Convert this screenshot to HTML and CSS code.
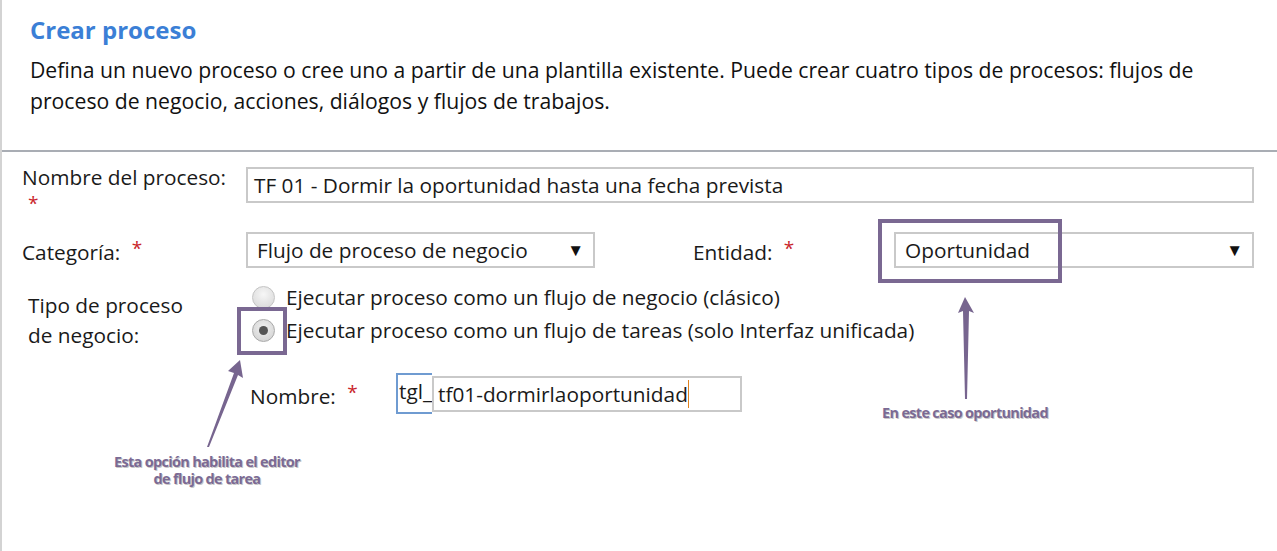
FILE: index.html
```html
<!DOCTYPE html>
<html>
  <head>
    <title>Crear proceso</title>
    <link rel="stylesheet" href="styles.css">
  </head>
  <body>
    <div class="page">
      <div class="intro">
        <h1>Crear proceso</h1>
        <p>Defina un nuevo proceso o cree uno a partir de una plantilla existente. Puede crear cuatro tipos de procesos: flujos de proceso de negocio, acciones, diálogos y flujos de trabajos.</p>
      </div>

      <div class="form">
        <div class="row row-name">
          <div class="lbl">Nombre del proceso:<span class="req">*</span></div>
          <div class="field wide">TF 01 - Dormir la oportunidad hasta una fecha prevista</div>
        </div>

        <div class="row row-cat">
          <div class="lbl">Categoría: <span class="req">*</span></div>
          <div class="field select cat">Flujo de proceso de negocio <span class="caret">&#9660;</span></div>
          <div class="lbl-ent">Entidad: <span class="req">*</span></div>
          <div class="field select ent">Oportunidad <span class="caret">&#9660;</span></div>
        </div>

        <div class="row row-type">
          <div class="lbl lbl-type">Tipo de proceso<br>de negocio:</div>
          <div class="options">
            <div class="opt"><span class="radio"></span>Ejecutar proceso como un flujo de negocio (clásico)</div>
            <div class="opt"><span class="radio on"></span>Ejecutar proceso como un flujo de tareas (solo Interfaz unificada)</div>
          </div>
        </div>

        <div class="row row-short">
          <div class="lbl-short">Nombre: <span class="req">*</span></div>
          <div class="prefix">tgl_</div>
          <div class="field short">tf01-dormirlaoportunida<span class="cursor">d</span></div>
        </div>
      </div>

      <!-- annotations -->
      <div class="mark mark-ent"></div>
      <div class="mark mark-radio"></div>
      <svg class="arrows" width="1277" height="551">
        <polygon points="965,297 958,313 963,311 965,399 967,399 969,311 974,313" />
        <polygon points="240,360 228,371 234,373 207,447 209,447 238,375 243,378" />
      </svg>
      <div class="note note-ent">En este caso oportunidad</div>
      <div class="note note-radio">Esta opción habilita el editor<br>de flujo de tarea</div>
    </div>
  </body>
</html>
```

FILE: styles.css
```css
body {
  margin: 0;
  padding: 0;
  background-color: #fff;
  font-family: "Open Sans", "Noto Sans", sans-serif;
  color: #1a1a1a;
}

.page {
  position: relative;
  width: 1277px;
  height: 551px;
  box-sizing: border-box;
  border-left: 2px solid #d3d3d3;
  overflow: hidden;
}

.intro {
  padding: 14px 67px 0 28px;
  height: 136px;
  border-bottom: 2px solid #a9adb4;
}

.intro h1 {
  margin: 0;
  font-size: 24px;
  font-weight: bold;
  color: #3b7fd6;
  line-height: 32px;
}

.intro p {
  margin: 8px 0 0 0;
  font-size: 21.2px;
  line-height: 31px;
  color: #111;
}

.form {
  padding: 14px 23px 0 20px;
  font-size: 20.8px;
}

.row {
  display: flex;
  align-items: flex-start;
}

.lbl {
  width: 224px;
  flex-shrink: 0;
  line-height: 22px;
}

.req {
  color: #c9252b;
  font-size: 19px;
  position: relative;
  top: -5px;
  margin-left: 6px;
}

.row-name .req {
  display: block;
  top: 0;
  margin: 6px 0 0 6px;
  line-height: 18px;
}

.field {
  box-sizing: border-box;
  border: 2px solid #c9c9c9;
  height: 36px;
  line-height: 32px;
  padding: 0 6px;
  white-space: nowrap;
}

.wide {
  flex: 1;
  margin-top: 1px;
}

.row-cat {
  margin-top: 20px;
  align-items: center;
}

.row-cat .lbl {
  padding-top: 4px;
}

.select {
  display: flex;
  justify-content: space-between;
  padding: 0 9px 0 9px;
}

.caret {
  font-size: 17px;
  color: #111;
}

.cat {
  width: 349px;
}

.lbl-ent {
  width: 201px;
  margin-left: 98px;
  padding-top: 4px;
}

.ent {
  flex: 1;
}

.row-type {
  margin-top: 17px;
}

.lbl-type {
  padding-left: 6px;
  width: 218px;
  line-height: 30px;
  padding-top: 5px;
}

.options {
  display: flex;
  flex-direction: column;
  gap: 9px;
}

.opt {
  display: flex;
  align-items: center;
  line-height: 24px;
}

.radio {
  width: 23px;
  height: 23px;
  margin: 0 11px 0 6px;
  border-radius: 50%;
  border: 1px solid #c4c4c4;
  background: radial-gradient(circle at 50% 35%, #f6f6f6, #d5d5d5);
  box-sizing: border-box;
  position: relative;
}

.radio.on {
  border-color: #a9a9a9;
  background: radial-gradient(circle at 50% 40%, #f2f2f2, #cdcdcd);
}

.radio.on::after {
  content: "";
  position: absolute;
  left: 6px;
  top: 6px;
  width: 9px;
  height: 9px;
  border-radius: 50%;
  background: #555;
}

.row-short {
  margin-top: 23px;
  align-items: center;
}

.lbl-short {
  width: 146px;
  padding-left: 228px;
  padding-top: 4px;
}

.prefix {
  box-sizing: border-box;
  height: 41px;
  width: 36px;
  border: 2px solid #6f9bd1;
  border-right: none;
  line-height: 32px;
  padding-left: 1px;
  overflow: hidden;
  white-space: nowrap;
}

.short {
  width: 310px;
  padding: 0 0 0 4px;
}

.cursor {
  border-right: 1px solid #e0821e;
}

/* annotation overlays */
.mark {
  position: absolute;
  border: 4px solid #7a6892;
  box-sizing: border-box;
}

.mark-ent {
  left: 876px;
  top: 219px;
  width: 184px;
  height: 64px;
}

.mark-radio {
  left: 235px;
  top: 307px;
  width: 50px;
  height: 48px;
}

.arrows {
  position: absolute;
  left: -2px;
  top: 0;
  fill: #77658f;
}

.note {
  position: absolute;
  font-family: "Open Sans", sans-serif;
  font-weight: bold;
  font-size: 14.5px;
  line-height: 17px;
  letter-spacing: -0.7px;
  color: #7b6a94;
  text-align: center;
  white-space: nowrap;
  text-shadow: 1px 1px 0 #c8c8c8, -1px 0 0 #fff;
}

.note-ent {
  left: 863px;
  top: 404px;
  width: 200px;
}

.note-radio {
  left: 85px;
  top: 453px;
  width: 240px;
}
```
